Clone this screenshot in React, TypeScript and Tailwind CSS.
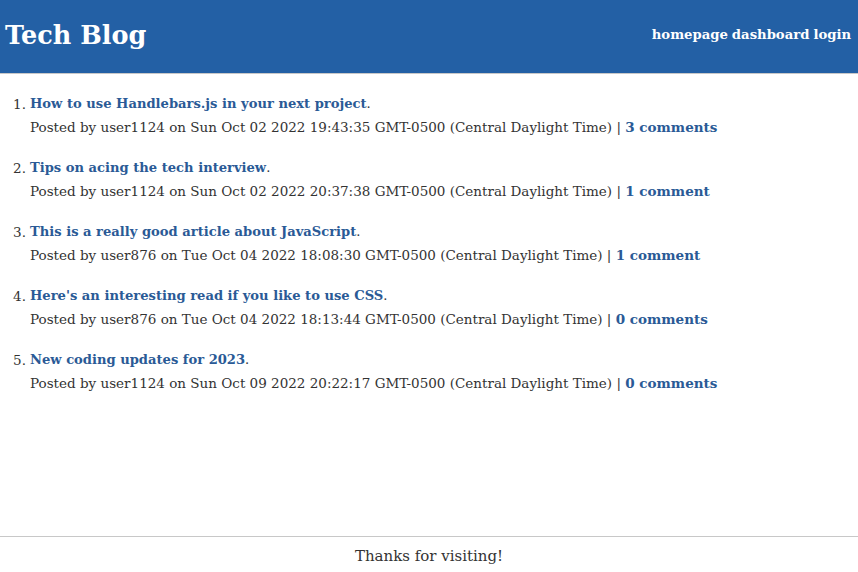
import React from "react";

const posts = [
  { title: "How to use Handlebars.js in your next project", user: "user1124", date: "Sun Oct 02 2022 19:43:35", comments: "3 comments" },
  { title: "Tips on acing the tech interview", user: "user1124", date: "Sun Oct 02 2022 20:37:38", comments: "1 comment" },
  { title: "This is a really good article about JavaScript", user: "user876", date: "Tue Oct 04 2022 18:08:30", comments: "1 comment" },
  { title: "Here's an interesting read if you like to use CSS", user: "user876", date: "Tue Oct 04 2022 18:13:44", comments: "0 comments" },
  { title: "New coding updates for 2023", user: "user1124", date: "Sun Oct 09 2022 20:22:17", comments: "0 comments" },
];

export default function App() {
  return (
    <div className="min-h-screen flex flex-col bg-white text-[#333] font-['DejaVu_Serif',serif]">
      <header className="h-[74px] bg-[#2360a5] border-b border-[#c8c8c8] flex items-center justify-between pl-[5px] pr-[7px]">
        <h1 className="text-white font-bold text-[25.5px] leading-none mb-[1px]">Tech Blog</h1>
        <nav className="text-white font-bold text-[13.2px] flex gap-[4px] mb-[3px]">
          <a>homepage</a>
          <a>dashboard</a>
          <a>login</a>
        </nav>
      </header>
      <main className="flex-1">
        <ol className="pt-[17px] flex flex-col gap-[16px] text-[13.5px] leading-[24px]">
          {posts.map((p, i) => (
            <li key={i} className="flex">
              <span className="w-[30px] pr-[4px] text-right h-[24px] leading-[26px]">{i + 1}.</span>
              <div>
                <div className="h-[24px] leading-[26px] text-[13.1px]">
                  <a className="font-bold text-[#2a5a96]">{p.title}</a>.
                </div>
                <div className="h-[24px]">
                  Posted by {p.user} on {p.date} GMT-0500 (Central Daylight Time) |{" "}
                  <a className="font-bold text-[#2a5a96]">{p.comments}</a>
                </div>
              </div>
            </li>
          ))}
        </ol>
      </main>
      <footer className="border-t border-[#c8c8c8] h-[36px] flex items-center justify-center pt-[3px] text-[15px]">
        Thanks for visiting!
      </footer>
    </div>
  );
}
